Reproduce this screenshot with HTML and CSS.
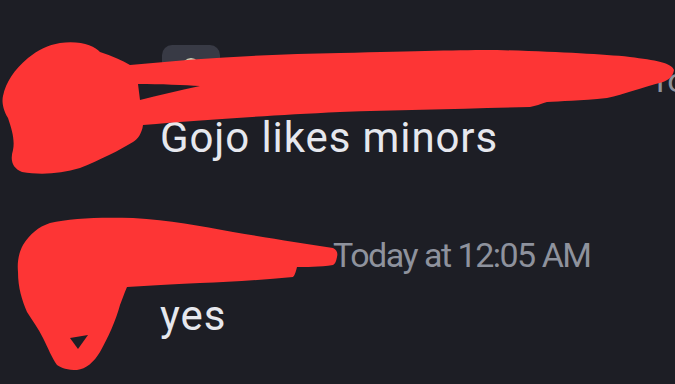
FILE: index.html
```html
<!DOCTYPE html>
<html>
<head>
<meta charset="utf-8">
<link rel="stylesheet" href="styles.css">
</head>
<body>
<div class="chat">
  <div class="msg msg1">
    <div class="avatar"></div>
    <div class="body">
      <div class="head">
        <span class="badge"><span class="dot"></span></span>
        <span class="name"></span>
        <span class="time far">Today at 12:04 AM</span>
      </div>
      <div class="text">Gojo likes minors</div>
    </div>
  </div>
  <div class="msg msg2">
    <div class="avatar"></div>
    <div class="body">
      <div class="head">
        <span class="name short"></span>
        <span class="time">Today at 12:05 AM</span>
      </div>
      <div class="text">yes</div>
    </div>
  </div>
</div>
<svg class="scribble" width="675" height="384" viewBox="0 0 675 384">
  <g fill="#fd3535">
    <path d="M60 43 C80 40 95 46 100 52 C112 56 122 60 130 65 C200 58 270 54 340 53 C420 51 460 50 497 50 C560 52 600 54 630 57 C655 60 672 63 674 70 C673 77 668 80 663 82 C640 88 625 94 607 98 C580 101 560 101 547 102 C540 104 536 106 530 107 C460 109 400 110 340 112 C260 116 200 120 143 125 C142 133 138 139 133 142 C120 150 100 160 80 168 C60 174 40 175 22 172 C12 168 10 160 13 150 C15 140 12 130 8 118 C2 108 2 100 3 96 C6 82 14 70 28 58 C38 50 48 45 60 43 Z"/>
    <path d="M50 223 C70 218 100 217 133 218 C170 220 200 226 233 232 C270 238 300 243 333 248 C337 250 338 253 337 257 C336 262 335 264 333 265 C320 267 305 267 297 267 C296 271 295 275 293 277 C260 280 230 282 200 283 C170 284 150 286 127 287 C124 294 122 300 120 305 C116 320 108 338 100 352 C94 362 86 369 77 370 C68 370 61 368 57 365 C52 358 48 348 43 338 C38 328 32 320 27 312 C22 300 18 288 18 272 C17 262 19 252 23 245 C30 234 38 227 50 223 Z"/>
  </g>
  <path d="M70 338 L88 335 L78 349 Z" fill="#1d1e25"/>
  <path d="M138 84 C160 84 185 85 200 86 C180 90 160 95 140 100 Z" fill="#1d1e25"/>
</svg>
</body>
</html>
```
FILE: styles.css
```css
html, body {
  margin: 0;
  padding: 0;
  width: 675px;
  height: 384px;
  overflow: hidden;
  background: #1d1e25;
  font-family: Roboto, "Noto Sans", sans-serif;
}
.chat {
  display: flex;
  flex-direction: column;
  padding-top: 45px;
}
.msg {
  display: flex;
}
.avatar {
  width: 160px;
  flex: none;
}
.body {
  display: flex;
  flex-direction: column;
  flex: 1;
  min-width: 0;
}
.head {
  display: flex;
  align-items: flex-start;
  white-space: nowrap;
}
.msg1 .head {
  height: 69px;
}
.badge {
  flex: none;
  width: 58px;
  height: 58px;
  border-radius: 10px;
  background: #383a45;
  margin-left: 2px;
  display: flex;
  justify-content: center;
  padding-top: 13px;
  box-sizing: border-box;
}
.dot {
  width: 18px;
  height: 18px;
  border-radius: 50%;
  background: #c9d3b8;
}
.name {
  width: 430px;
  flex: none;
}
.name.short {
  width: 173px;
}
.time {
  flex: none;
  color: #8e929d;
  font-size: 34px;
  letter-spacing: -1.5px;
  line-height: 40px;
}
.far {
  margin-top: 15px;
}
.text {
  color: #e6e8ee;
  font-size: 42px;
  letter-spacing: 0.9px;
  line-height: 48px;
}
.msg2 {
  margin-top: 73px;
}
.msg2 .head {
  height: 57px;
}
.scribble {
  position: absolute;
  left: 0;
  top: 0;
}
```
